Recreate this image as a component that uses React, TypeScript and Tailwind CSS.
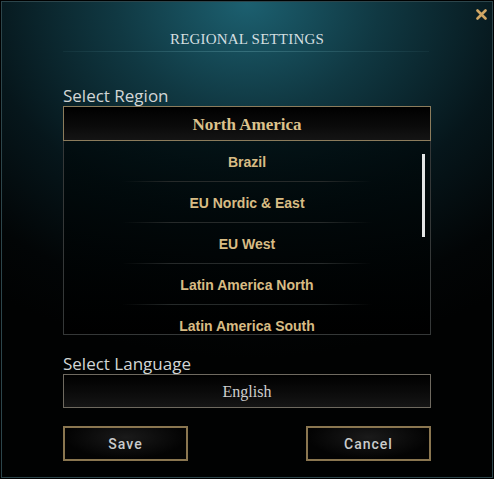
import React from "react";

const regions = [
  "Brazil",
  "EU Nordic & East",
  "EU West",
  "Latin America North",
  "Latin America South",
];

export default function App() {
  return (
    <div className="w-[494px] h-[479px] bg-black p-px">
      <div className="relative w-full h-full border border-[#2c454b] bg-[radial-gradient(ellipse_90%_75%_at_50%_0%,#1c6070_0%,#103842_30%,#06161b_60%,#020506_85%,#010202_100%)] flex flex-col px-[61px] overflow-hidden">
        <button className="absolute right-[5px] top-[6px] w-[12px] h-[12px] flex items-center justify-center">
          <svg width="11" height="11" viewBox="0 0 11 11">
            <path d="M1.5 1.5 L9.5 9.5 M9.5 1.5 L1.5 9.5" stroke="#d0a664" strokeWidth="2.6" strokeLinecap="round" />
          </svg>
        </button>

        <div className="pt-[28px] h-[45px] text-center text-[15px] leading-[18px] text-[#d4dfe0] tracking-[0.2px] [font-family:'Liberation_Serif',serif]">
          REGIONAL SETTINGS
        </div>
        <div className="mt-[4px] h-px w-[366px] bg-[linear-gradient(90deg,rgba(80,130,140,0.1),rgba(90,150,160,0.45)_50%,rgba(80,130,140,0.1))]" />

        <div className="mt-[34px] h-[20px] text-[17px] leading-[20px] text-[#d2d6d6] [font-family:'Open_Sans',sans-serif] font-normal">
          Select Region
        </div>
        <div className="h-[35px] w-[368px] pt-[2px] border border-[#8c7c5c] bg-[linear-gradient(180deg,#000_0%,#0b0b0b_60%,#141414_100%)] flex items-center justify-center text-[17px] font-bold text-[#dcc28c] [font-family:'Liberation_Serif',serif]">
          North America
        </div>
        <div className="relative h-[194px] w-[368px] border border-t-0 border-[#353838] bg-[linear-gradient(180deg,rgba(0,10,12,0.75),rgba(0,0,0,0.95))] overflow-hidden">
          {regions.map((r) => (
            <div key={r} className="h-[41px] flex flex-col">
              <div className="flex-1 pt-[3px] flex items-center justify-center text-[14px] font-bold text-[#d8bc84] [font-family:'Liberation_Sans',sans-serif]">
                {r}
              </div>
              <div className="h-px mx-[58px] bg-[linear-gradient(90deg,rgba(40,44,44,0),#262a2a_20%,#262a2a_80%,rgba(40,44,44,0))]" />
            </div>
          ))}
          <div className="absolute left-[358px] top-[13px] w-[3px] h-[83px] bg-[#e4e6e6]" />
        </div>

        <div className="mt-[19px] h-[20px] text-[17px] leading-[20px] text-[#d2d6d6] [font-family:'Open_Sans',sans-serif] font-normal">
          Select Language
        </div>
        <div className="h-[34px] w-[368px] pt-[2px] border border-[#6f6a60] bg-[linear-gradient(180deg,#000_0%,#0c0c0c_60%,#151515_100%)] flex items-center justify-center text-[16px] text-[#d0d0d0] [font-family:'Liberation_Serif',serif]">
          English
        </div>

        <div className="mt-[18px] w-[368px] flex justify-between">
          <button className="w-[125px] h-[35px] pt-[2px] border-2 border-[#8a7650] bg-[radial-gradient(ellipse_at_50%_30%,#1a1a1a,#030303_70%)] text-[14px] font-medium tracking-[1px] text-[#c9cbcb] [font-family:'Roboto',sans-serif]">
            Save
          </button>
          <button className="w-[125px] h-[35px] pt-[2px] border-2 border-[#8a7650] bg-[radial-gradient(ellipse_at_50%_30%,#1a1a1a,#030303_70%)] text-[14px] font-medium tracking-[1px] text-[#c9cbcb] [font-family:'Roboto',sans-serif]">
            Cancel
          </button>
        </div>
      </div>
    </div>
  );
}
